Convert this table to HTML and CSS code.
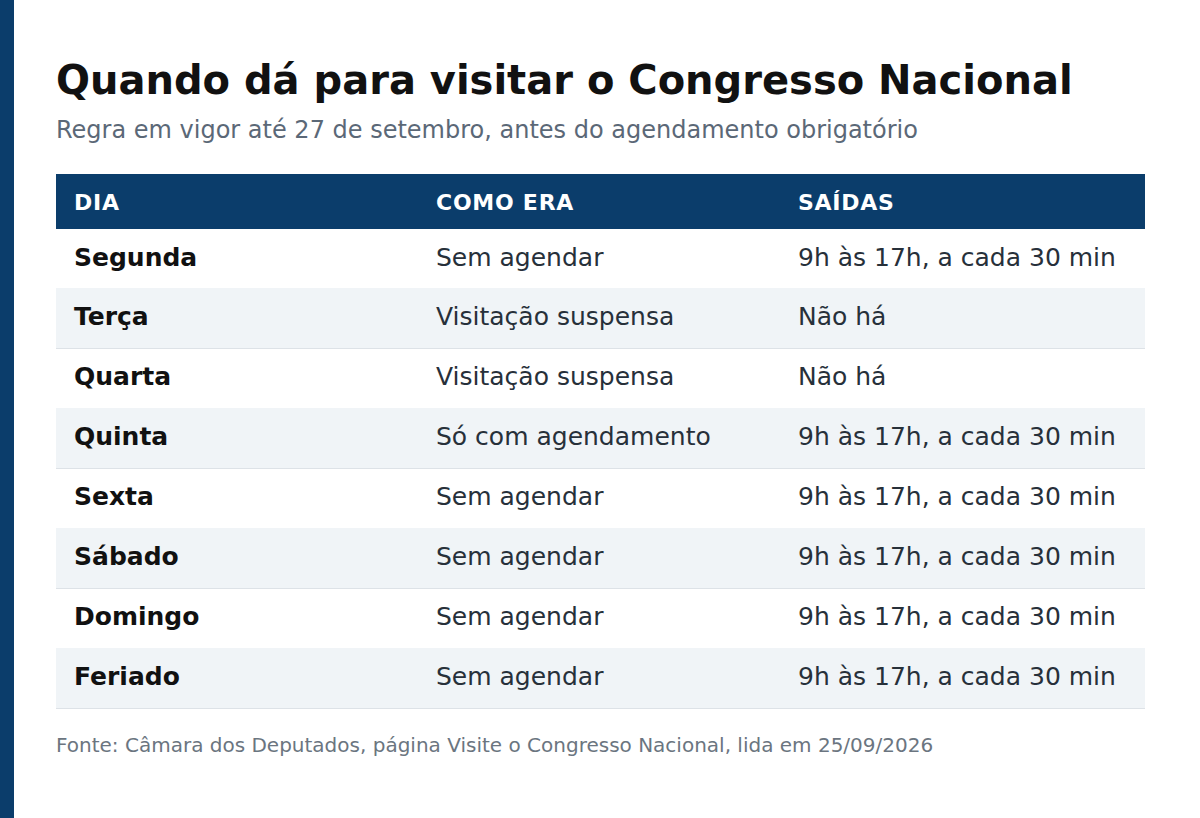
FILE: index.html
```html
<!DOCTYPE html>
<html lang="pt-BR">
<head>
<meta charset="utf-8">
<title>Quando dá para visitar o Congresso Nacional</title>
<link rel="stylesheet" href="styles.css">
</head>
<body>
<main class="page">
  <h1 class="title">Quando dá para visitar o Congresso Nacional</h1>
  <p class="subtitle">Regra em vigor até 27 de setembro, antes do agendamento obrigatório</p>
  <table class="schedule">
    <colgroup>
      <col class="col-day">
      <col class="col-rule">
      <col class="col-times">
    </colgroup>
    <thead>
      <tr><th>Dia</th><th>Como era</th><th>Saídas</th></tr>
    </thead>
    <tbody>
      <tr><td class="day">Segunda</td><td>Sem agendar</td><td>9h às 17h, a cada 30 min</td></tr>
      <tr><td class="day">Terça</td><td>Visitação suspensa</td><td>Não há</td></tr>
      <tr><td class="day">Quarta</td><td>Visitação suspensa</td><td>Não há</td></tr>
      <tr><td class="day">Quinta</td><td>Só com agendamento</td><td>9h às 17h, a cada 30 min</td></tr>
      <tr><td class="day">Sexta</td><td>Sem agendar</td><td>9h às 17h, a cada 30 min</td></tr>
      <tr><td class="day">Sábado</td><td>Sem agendar</td><td>9h às 17h, a cada 30 min</td></tr>
      <tr><td class="day">Domingo</td><td>Sem agendar</td><td>9h às 17h, a cada 30 min</td></tr>
      <tr><td class="day">Feriado</td><td>Sem agendar</td><td>9h às 17h, a cada 30 min</td></tr>
    </tbody>
  </table>
  <p class="source">Fonte: Câmara dos Deputados, página Visite o Congresso Nacional, lida em 25/09/2026</p>
</main>
</body>
</html>
```
FILE: styles.css
```css
html, body {
  margin: 0;
  padding: 0;
  background: #ffffff;
}
body {
  font-family: "DejaVu Sans", "Liberation Sans", sans-serif;
  color: #111111;
  min-height: 818px;
  border-left: 14px solid #0b3d6b;
  box-sizing: border-box;
}
.page {
  padding: 56px 55px 0 42px;
}
.title {
  margin: 0;
  font-size: 40px;
  line-height: 48px;
  font-weight: bold;
  color: #111111;
}
.subtitle {
  margin: 10px 0 0 0;
  font-size: 24px;
  line-height: 32px;
  color: #5b6877;
}
.schedule {
  margin-top: 28px;
  width: 100%;
  border-collapse: collapse;
  table-layout: fixed;
}
.col-day { width: 362px; }
.col-rule { width: 362px; }
.schedule th {
  background: #0b3d6b;
  color: #ffffff;
  text-align: left;
  font-size: 22px;
  font-weight: bold;
  text-transform: uppercase;
  height: 55px;
  padding: 2px 18px 0 18px;
  box-sizing: border-box;
  letter-spacing: 0.75px;
}
.schedule td {
  font-size: 25px;
  color: #27303a;
  height: 60px;
  padding: 0 18px 3px 18px;
  box-sizing: border-box;
  white-space: nowrap;
}
.schedule tbody tr:first-child td {
  height: 59px;
}
.schedule td.day {
  font-weight: bold;
  color: #111111;
}
.schedule tbody tr:nth-child(even) td {
  background: #f0f4f7;
  border-bottom: 1px solid #dde2e7;
}
.source {
  margin: 24px 0 0 0;
  font-size: 20px;
  line-height: 24px;
  color: #6b7580;
}
```
